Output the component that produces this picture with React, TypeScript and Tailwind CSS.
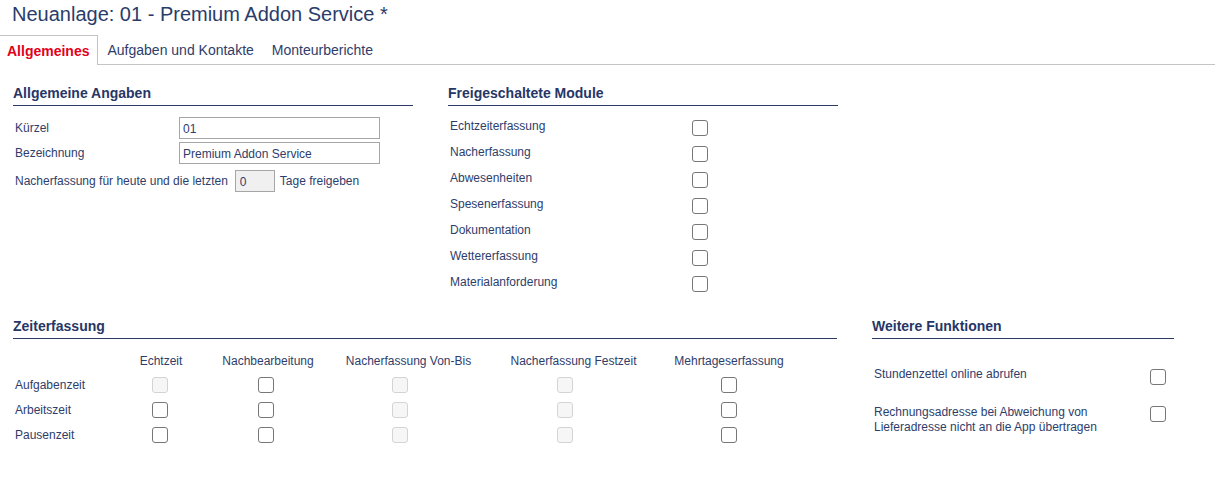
import React from "react";

const FONT = "font-['Liberation_Sans',Arial,sans-serif]";

const Box = ({ disabled = false }: { disabled?: boolean }) => (
  <input
    type="checkbox"
    disabled={disabled}
    className={
      disabled
        ? "appearance-none m-0 block w-[16px] h-[16px] rounded-[3px] border border-[#d4d4d4] bg-[#f6f6f6]"
        : "appearance-none m-0 block w-[16px] h-[16px] rounded-[3px] border border-[#777777] bg-white"
    }
  />
);

const Heading = ({ children }: { children: React.ReactNode }) => (
  <div className="text-[14px] font-bold leading-[16px] pb-[4px] border-b border-[#2b3a67] text-[#263666]">
    {children}
  </div>
);

const MODULE = [
  "Echtzeiterfassung",
  "Nacherfassung",
  "Abwesenheiten",
  "Spesenerfassung",
  "Dokumentation",
  "Wettererfassung",
  "Materialanforderung",
];

// disabled flags per row: Echtzeit, Nachbearbeitung, Von-Bis, Festzeit, Mehrtage
const ZEIT: [string, boolean[]][] = [
  ["Aufgabenzeit", [true, false, true, true, false]],
  ["Arbeitszeit", [false, false, true, true, false]],
  ["Pausenzeit", [false, false, true, true, false]],
];

const SPALTEN = ["Echtzeit", "Nachbearbeitung", "Nacherfassung Von-Bis", "Nacherfassung Festzeit", "Mehrtageserfassung"];

// Checkboxen sitzen nicht genau unter der Spaltenmitte
const CB_CELL = [
  "flex justify-center items-center pr-[3px]",
  "flex justify-center items-center pr-[5px]",
  "flex justify-center items-center pr-[18px]",
  "flex justify-center items-center pr-[18px]",
  "flex justify-center items-center",
];

const App = () => {
  return (
    <div className={`${FONT} w-[1215px] h-[501px] bg-white text-[#2e3d6b] text-[12px]`}>
      <div className="h-[35px] pt-[3px] pl-[12px] text-[20px] leading-[23px] text-[#2a3c6a]">
        Neuanlage: 01 - Premium Addon Service *
      </div>

      <div className="flex h-[30px] border-b border-[#c4c4c4] text-[14px]">
        <div className="-mb-px h-[30px] flex items-center pt-[2px] pl-[7px] pr-[8px] border-t border-r border-[#c4c4c4] bg-white font-bold text-[#e2001a]">
          Allgemeines
        </div>
        <div className="flex items-center pt-[2px] px-[9px]">Aufgaben und Kontakte</div>
        <div className="flex items-center pt-[2px] px-[9px]">Monteurberichte</div>
      </div>

      <div className="pl-[13px] pt-[20px]">
        <div className="flex gap-[35px]">
          <div className="w-[400px]">
            <Heading>Allgemeine Angaben</Heading>
            <div className="mt-[11px] h-[22px] flex items-center pl-[2px]">
              <span className="w-[164px]">Kürzel</span>
              <input
                readOnly
                value="01"
                className="w-[201px] h-[22px] border border-[#a6a6a6] px-[3px] pt-[1px] text-[12px] text-[#2e3d6b] outline-none"
              />
            </div>
            <div className="mt-[3px] h-[22px] flex items-center pl-[2px]">
              <span className="w-[164px]">Bezeichnung</span>
              <input
                readOnly
                value="Premium Addon Service"
                className="w-[201px] h-[22px] border border-[#a6a6a6] px-[3px] pt-[1px] text-[12px] text-[#2e3d6b] outline-none"
              />
            </div>
            <div className="mt-[6px] h-[22px] flex items-center pl-[2px]">
              <span>Nacherfassung für heute und die letzten</span>
              <input
                readOnly
                value="0"
                className="ml-[7px] w-[40px] h-[22px] border border-[#a6a6a6] bg-[#f0f0f0] px-[4px] pt-[1px] text-[12px] text-[#2e3d6b] outline-none"
              />
              <span className="ml-[5px]">Tage freigeben</span>
            </div>
          </div>

          <div className="w-[390px]">
            <Heading>Freigeschaltete Module</Heading>
            <div className="mt-[7px]">
              {MODULE.map((m) => (
                <div key={m} className="h-[26px] flex items-center pl-[2px]">
                  <span className="w-[242px]">{m}</span>
                  <div className="mt-[4px]">
                    <Box />
                  </div>
                </div>
              ))}
            </div>
          </div>
        </div>

        <div className="mt-[23px] flex gap-[35px]">
          <div className="w-[824px]">
            <Heading>Zeiterfassung</Heading>
            <div className="mt-[11px] grid grid-cols-[118px_60px_154px_127px_203px_108px]">
              <div className="h-[22px]" />
              {SPALTEN.map((s) => (
                <div key={s} className="h-[22px] flex justify-center items-center whitespace-nowrap">
                  {s}
                </div>
              ))}
              {ZEIT.map(([label, dis]) => (
                <React.Fragment key={label}>
                  <div className="h-[25px] flex items-center pl-[2px] pt-[1px]">{label}</div>
                  {dis.map((d, i) => (
                    <div key={i} className={`h-[25px] ${CB_CELL[i]}`}>
                      <Box disabled={d} />
                    </div>
                  ))}
                </React.Fragment>
              ))}
            </div>
          </div>

          <div className="w-[302px]">
            <Heading>Weitere Funktionen</Heading>
            <div className="mt-[28px] flex pl-[2px]">
              <span className="w-[276px] leading-[15px]">Stundenzettel online abrufen</span>
              <div className="mt-[2px]">
                <Box />
              </div>
            </div>
            <div className="mt-[20px] flex pl-[2px]">
              <span className="w-[276px] leading-[15px]">
                Rechnungsadresse bei Abweichung von Lieferadresse nicht an die App übertragen
              </span>
              <div className="mt-[1px]">
                <Box />
              </div>
            </div>
          </div>
        </div>
      </div>
    </div>
  );
};

export default App;
